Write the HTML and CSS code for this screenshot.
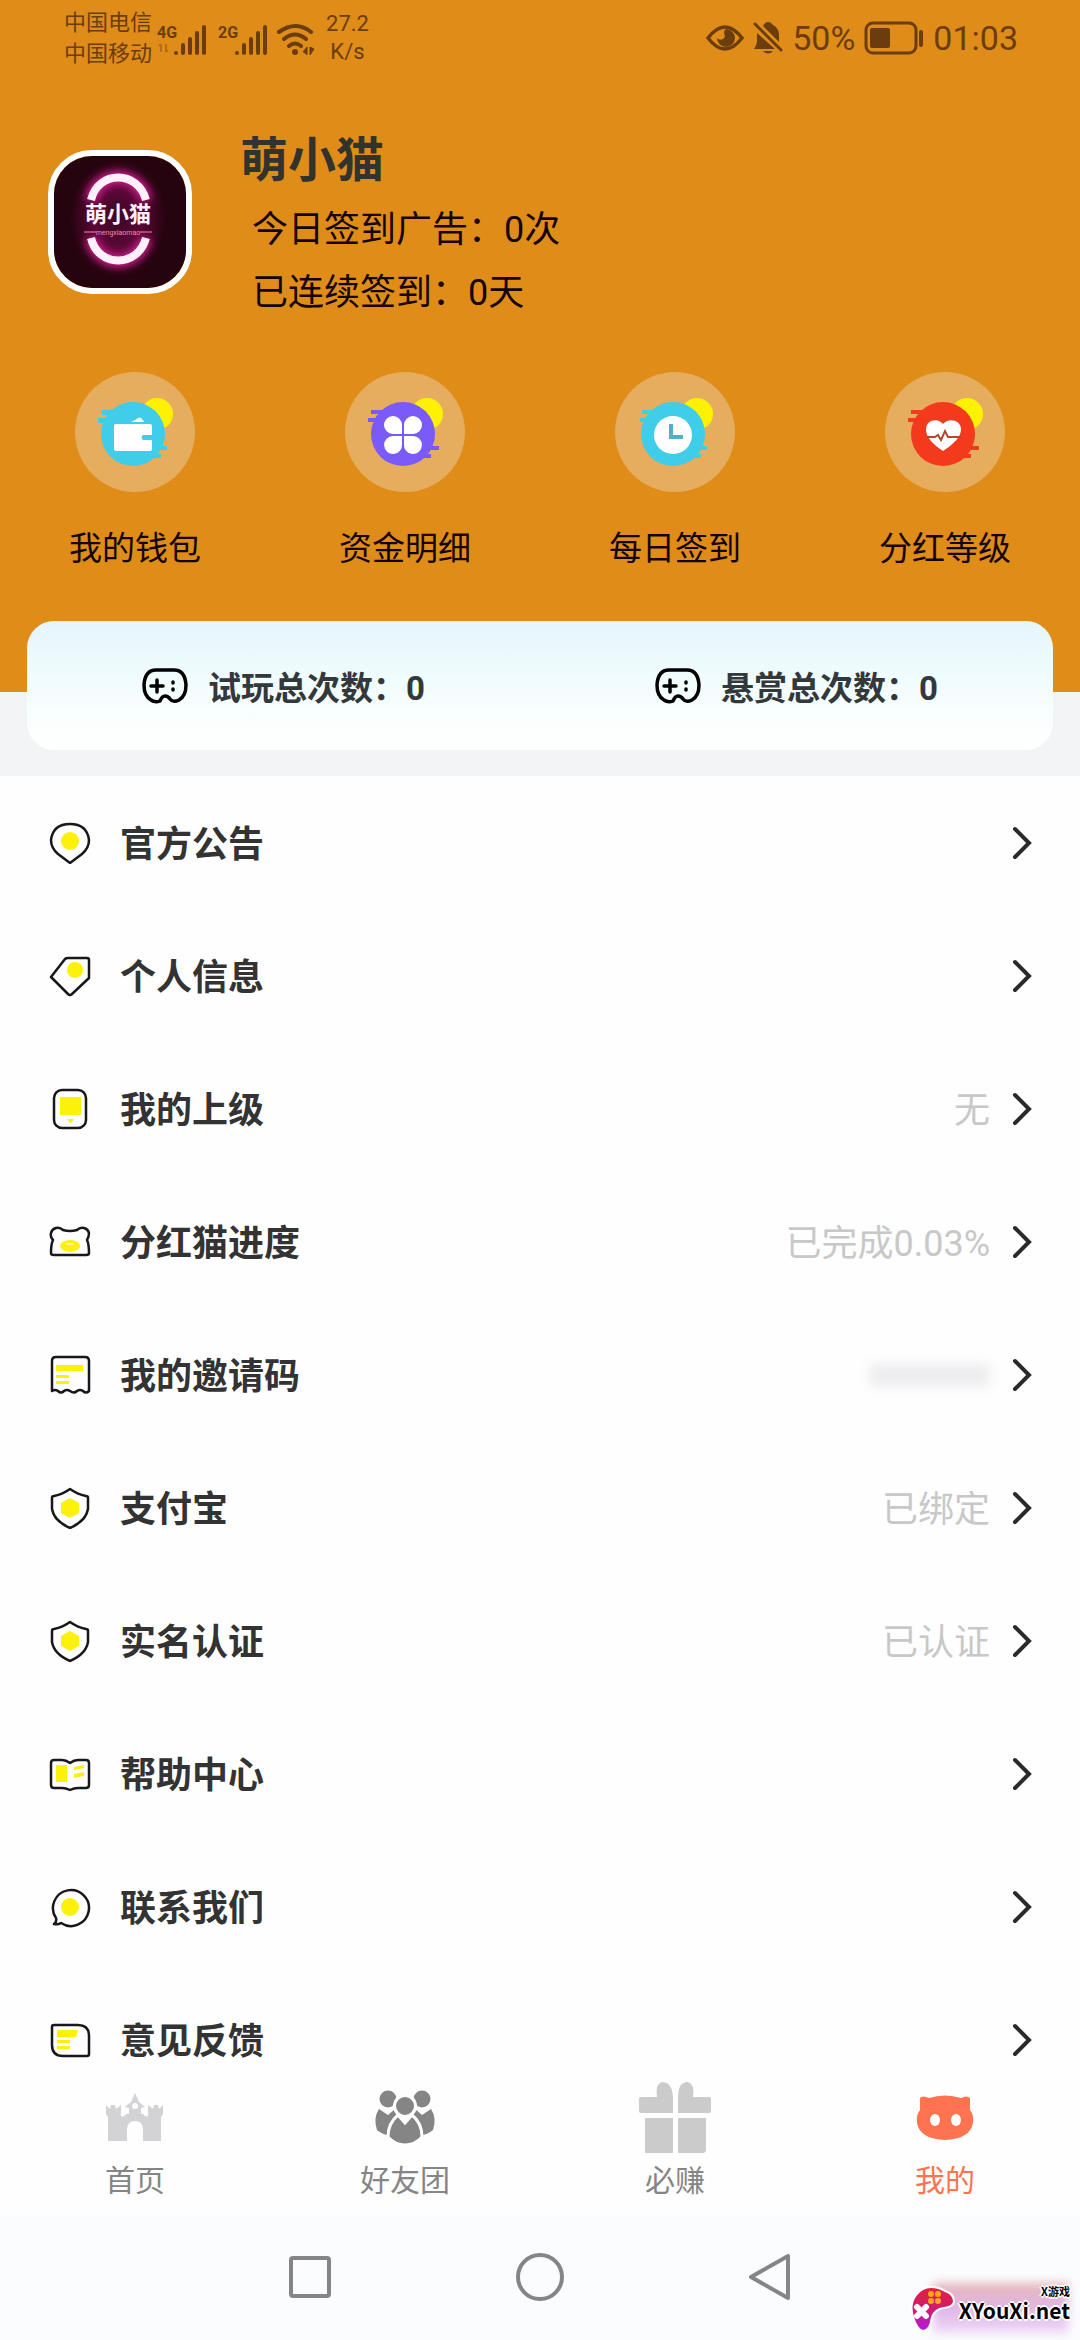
FILE: index.html
```html
<!DOCTYPE html>
<html lang="zh-CN">
	<head>
		<meta charset="utf-8">
		<title>我的</title>
		<meta name="viewport" content="width=device-width, initial-scale=1" />
		<link rel="stylesheet" href="styles.css">
	</head>
	<body>
		<header class="top">
			<div class="status">
				<div class="carriers"><span>中国电信</span><span>中国移动</span></div>
				<svg class="signals" width="160" height="36" viewBox="0 0 160 36">
					<g font-family="Roboto, sans-serif" font-weight="700" font-size="16" fill="currentColor">
						<text x="1" y="18">4G</text>
						<text x="62" y="18">2G</text>
					</g>
					<path d="M5 24v8M3 26l2-2M10 24v8M10 32l2-2" fill="none" stroke="currentColor" stroke-width="2" opacity=".35"/>
					<g stroke="currentColor" stroke-width="4" stroke-linecap="round">
						<path d="M20 33v0M27 25v8M34 19v14M41 13v20M48 7v26"/>
						<path d="M81 33v0M88 25v8M95 19v14M102 13v20M109 7v26"/>
					</g>
					<g fill="none" stroke="currentColor" stroke-width="4" stroke-linecap="round">
						<path d="M123 12q17-12 32 0M128 19q11-9 22 0M133 26q6-5 12 0"/>
					</g>
					<circle cx="139" cy="32" r="3" fill="currentColor"/>
					<path d="M147 32l4-5v8M154 27v8l4-6z" fill="currentColor" stroke="currentColor"/>
				</svg>
				<div class="speed"><span>27.2</span><span>K/s</span></div>
				<div class="status-right">
					<svg width="38" height="32" viewBox="0 0 38 32">
						<path d="M2 16Q19-6 36 16Q19 38 2 16z" fill="none" stroke="currentColor" stroke-width="3.5"/>
						<path d="M20 7a9 9 0 1 1-9 9q3 3 6 1t1-6q0-3 2-4z" fill="currentColor"/>
					</svg>
					<svg width="30" height="34" viewBox="0 0 30 34">
						<path d="M10 5q2-4 5-4t5 3q6 3 6 10v7zM4 12l18 16H1q3-4 3-8zM10 30h10q-5 5-10 0z" fill="currentColor"/>
						<path d="M2 3l26 26" stroke="currentColor" stroke-width="3" stroke-linecap="round"/>
					</svg>
					<span>50%</span>
					<svg width="60" height="34" viewBox="0 0 60 34">
						<rect x="2" y="2" width="50" height="30" rx="7" fill="none" stroke="currentColor" stroke-width="3"/>
						<rect x="6" y="7" width="20" height="20" rx="2" fill="currentColor"/>
						<path d="M57 11v13" stroke="currentColor" stroke-width="4" stroke-linecap="round"/>
					</svg>
					<time>01:03</time>
				</div>
			</div>

			<div class="profile">
				<svg class="avatar" viewBox="0 0 132 132">
					<defs>
						<radialGradient id="neon">
							<stop offset="0" stop-color="#3a0724"/>
							<stop offset=".5" stop-color="#5a0736"/>
							<stop offset="1" stop-color="#26040f"/>
						</radialGradient>
						<filter id="glow" x="-30%" y="-30%" width="160%" height="160%"><feGaussianBlur stdDeviation="4"/></filter>
					</defs>
					<rect width="132" height="132" fill="#26040f"/>
					<ellipse cx="64" cy="62" rx="48" ry="58" fill="url(#neon)"/>
					<g fill="none" stroke="#e0249a" stroke-width="12" filter="url(#glow)">
						<path d="M37 44C44 14 84 14 92 44M37 82C44 112 84 112 92 82"/>
					</g>
					<g fill="none" stroke="#fff0fa" stroke-width="8">
						<path d="M37 44C44 14 84 14 92 44M37 82C44 112 84 112 92 82"/>
					</g>
					<text class="avatar-name" x="64" y="66" text-anchor="middle">萌小猫</text>
					<path d="M30 76h12M86 76h12" stroke="#f8a"/>
					<text class="avatar-sub" x="64" y="79" text-anchor="middle">mengxiaomao</text>
				</svg>
				<div class="who">
					<h1>萌小猫</h1>
					<p>今日签到广告：0次</p>
					<p>已连续签到：0天</p>
				</div>
			</div>

			<nav class="quick">
				<a href="#">
					<svg viewBox="0 0 120 120">
						<circle cx="82" cy="42" r="16" fill="#fff200"/>
						<g fill="#3fcdea"><circle cx="58" cy="62" r="32"/><path d="M27 38h14v5H27zM23 46h14v5H23zM80 74h12v4H80zM74 82h12v4H74z"/></g>
						<path d="M56 50q5-2 7-4 3-2 6 4zM41 52h34q2 0 2 2v9h-9a3 3 0 0 0 0 5h9v9q0 2-2 2H41q-2 0-2-2V54q0-2 2-2z" fill="#fff"/>
					</svg>
					<span>我的钱包</span>
				</a>
				<a href="#">
					<svg viewBox="0 0 120 120">
						<circle cx="82" cy="42" r="16" fill="#fff200"/>
						<g fill="#7a5af8"><circle cx="58" cy="62" r="32"/><path d="M26 38h14v4H26zM23 46h14v4H23zM78 74h16v4H78zM74 82h12v4H74z"/></g>
						<path d="M57 62h-9a9 9 0 1 1 9-9zM59 62v-9a9 9 0 1 1 9 9zM57 64v8a9 9 0 1 1-9-8zM59 64h9a9 9 0 1 1-9 8z" fill="#fff"/>
					</svg>
					<span>资金明细</span>
				</a>
				<a href="#">
					<svg viewBox="0 0 120 120">
						<circle cx="82" cy="42" r="16" fill="#fff200"/>
						<g fill="#3fcdea"><circle cx="58" cy="62" r="32"/><path d="M27 38h14v4H27zM25 46h12v4H25zM80 74h12v4H80zM74 82h12v4H74z"/></g>
						<circle cx="58" cy="63" r="19" fill="#fff"/>
						<path d="M56 52v13h12" fill="none" stroke="#4ab4c4" stroke-width="4"/>
					</svg>
					<span>每日签到</span>
				</a>
				<a href="#">
					<svg viewBox="0 0 120 120">
						<circle cx="82" cy="42" r="16" fill="#fff200"/>
						<g fill="#f33a1d"><circle cx="58" cy="62" r="32"/><path d="M26 38h14v4H26zM23 46h14v4H23zM78 74h16v4H78zM74 82h12v4H74z"/></g>
						<path d="M58 79C48 72 41 66 41 57c0-9 12-12 17-5 5-7 18-4 18 5 0 9-8 15-18 22z" fill="#fff"/>
						<path d="M42 65h8l3-2 3 5 4-9 3 6h13" fill="none" stroke="#b5482c" stroke-width="2"/>
					</svg>
					<span>分红等级</span>
				</a>
			</nav>
		</header>

		<section class="summary">
			<div class="stats">
				<div class="stat">
					<svg width="46" height="36" viewBox="0 0 46 36"><path d="M18 33q-5 2-9-1Q2 28 2 17 3 2 14 2h18q11 0 12 15 0 11-7 15-6 3-9-1-2-3-5-3t-5 5M9 18h12M15 12v12M31 14v1M31 21v1" fill="none" stroke="#000" stroke-width="3.5" stroke-linecap="round" stroke-linejoin="round"/></svg>
					<span>试玩总次数：0</span>
				</div>
				<div class="stat">
					<svg width="46" height="36" viewBox="0 0 46 36"><path d="M18 33q-5 2-9-1Q2 28 2 17 3 2 14 2h18q11 0 12 15 0 11-7 15-6 3-9-1-2-3-5-3t-5 5M9 18h12M15 12v12M31 14v1M31 21v1" fill="none" stroke="#000" stroke-width="3.5" stroke-linecap="round" stroke-linejoin="round"/></svg>
					<span>悬赏总次数：0</span>
				</div>
			</div>
		</section>

		<main class="menu">
			<a href="#">
				<svg class="icon" viewBox="0 0 42 42"><path d="M21 41L9 32Q2 26 2 18 4 2 21 2t19 16q0 8-7 14z"/><circle class="y" cx="21" cy="19" r="9"/></svg>
				<span class="label">官方公告</span>
				<svg class="go" viewBox="0 0 20 34"><path d="M3 3l14 14L3 31"/></svg>
			</a>
			<a href="#">
				<svg class="icon" viewBox="0 0 42 42"><path d="M2 22L16 4q1-1 3-1h19q2 0 2 2v18L23 39q-2 2-4 0z"/><circle class="y" cx="26" cy="15" r="8"/></svg>
				<span class="label">个人信息</span>
				<svg class="go" viewBox="0 0 20 34"><path d="M3 3l14 14L3 31"/></svg>
			</a>
			<a href="#">
				<svg class="icon" viewBox="0 0 42 42"><rect x="5" y="2" width="32" height="38" rx="8"/><path class="y" d="M11 9h21v18H11zM18 31h7l-3 4h-1z"/></svg>
				<span class="label">我的上级</span>
				<span class="value">无</span>
				<svg class="go" viewBox="0 0 20 34"><path d="M3 3l14 14L3 31"/></svg>
			</a>
			<a href="#">
				<svg class="icon" viewBox="0 0 42 42"><path d="M14 9q7 2 14 0 3-3 7-2 4 1 5 5 0 4-2 7 2 4 2 13 0 2-3 2H5q-3 0-3-2 0-9 2-13-3-3-2-7 1-4 5-5 4-1 7 2z"/><ellipse class="y" cx="21" cy="25" rx="10" ry="6"/><ellipse cx="21" cy="23" rx="4" ry="1" fill="#fffbb0" stroke="none"/></svg>
				<span class="label">分红猫进度</span>
				<span class="value">已完成0.03%</span>
				<svg class="go" viewBox="0 0 20 34"><path d="M3 3l14 14L3 31"/></svg>
			</a>
			<a href="#">
				<svg class="icon" viewBox="0 0 42 42"><path d="M3 37V7q0-4 4-4h29q4 0 4 4v30q-3 3-6 0-3-2-6 0-3 3-7 0-3-2-6 0-3 3-6 0-3-2-6 0z"/><path class="y" d="M7 11h27v6H7zM7 21h13v3H7zM7 27h13v3H7z"/></svg>
				<span class="label">我的邀请码</span>
				<span class="masked"></span>
				<svg class="go" viewBox="0 0 20 34"><path d="M3 3l14 14L3 31"/></svg>
			</a>
			<a href="#">
				<svg class="icon" viewBox="0 0 42 42"><path d="M21 2q7 5 16 7 2 0 2 2v11q-2 12-18 19Q5 34 3 22V11q0-2 2-2 9-2 16-7z"/><path class="y" d="M21 11l9 5v10l-9 5-9-5V16z"/></svg>
				<span class="label">支付宝</span>
				<span class="value">已绑定</span>
				<svg class="go" viewBox="0 0 20 34"><path d="M3 3l14 14L3 31"/></svg>
			</a>
			<a href="#">
				<svg class="icon" viewBox="0 0 42 42"><path d="M21 2q7 5 16 7 2 0 2 2v11q-2 12-18 19Q5 34 3 22V11q0-2 2-2 9-2 16-7z"/><path class="y" d="M21 11l9 5v10l-9 5-9-5V16z"/></svg>
				<span class="label">实名认证</span>
				<span class="value">已认证</span>
				<svg class="go" viewBox="0 0 20 34"><path d="M3 3l14 14L3 31"/></svg>
			</a>
			<a href="#">
				<svg class="icon" viewBox="0 0 42 42"><path d="M21 10q4-3 8-3h8q3 0 3 3v22q0 3-3 3h-8q-4 0-8 2-4-2-8-2H5q-3 0-3-3V10q0-3 3-3h8q4 0 8 3z"/><path class="y" d="M7 12h11v17H7zM25 14l10-2v3l-10 2zM25 21l10-2v4l-10 2z"/></svg>
				<span class="label">帮助中心</span>
				<svg class="go" viewBox="0 0 20 34"><path d="M3 3l14 14L3 31"/></svg>
			</a>
			<a href="#">
				<svg class="icon" viewBox="0 0 42 42"><path d="M5 38q3-2 2-6A18 18 0 1 1 12 37q-3 2-7 1z"/><circle class="y" cx="21" cy="21" r="9"/></svg>
				<span class="label">联系我们</span>
				<svg class="go" viewBox="0 0 20 34"><path d="M3 3l14 14L3 31"/></svg>
			</a>
			<a href="#">
				<svg class="icon" viewBox="0 0 42 42"><path d="M5 6h24q11 0 11 11v18q0 2-2 2H14Q3 37 3 26V8q0-2 2-2z"/><path class="y" d="M8 11h21l-2 7H8zM8 21h13v3H8zM8 27h13v3H8z"/></svg>
				<span class="label">意见反馈</span>
				<svg class="go" viewBox="0 0 20 34"><path d="M3 3l14 14L3 31"/></svg>
			</a>
		</main>

		<footer class="bottom">
			<nav class="tabs">
				<a href="#">
					<svg viewBox="0 0 72 72"><path fill="#d3d3d6" d="M7 24l4 4 1-4h4l1 4 5-4v7q-1 6 3 4 3-3 5-2v-6l-4-1 6-5 4-9 4 9 6 5-4 1v6q2-1 4 2 4 2 3-4v-7l5 4 1-4h4l1 4 4-4v9l-2 3v24H44V49q0-9-8-9t-8 9v11H9V36l-2-3z"/><circle cx="36" cy="25" r="3" fill="#fff"/></svg>
					<span>首页</span>
				</a>
				<a href="#">
					<svg viewBox="0 0 72 72"><g fill="#858585"><circle cx="19" cy="18" r="8.500"/><circle cx="53" cy="18" r="8.500"/><path d="M10 28l9 6 7-6 8 10-14 16q-6 0-12-5-4-12 2-21zM62 28l-9 6-7-6-8 10 14 16q6 0 12-5 4-12-2-21z"/></g><g fill="#858585" stroke="#fff" stroke-width="3"><path d="M29 34l7 8 7-8q10 8 10 22-7 8-17 8t-17-8q0-14 10-22z"/><circle cx="36" cy="25" r="10.500"/></g></svg>
					<span>好友团</span>
				</a>
				<a href="#">
					<svg viewBox="0 0 72 72"><path fill="#cbcbcb" d="M2 16h16Q16 3 23 1q10 0 11 15v16H2q-2 0-2-2V18q0-2 2-2zM70 16H54Q56 3 49 1q-10 0-10 15v16h31q2 0 2-2V18q0-2-2-2zM6 37h28v35H6zM39 37h28v33l-2 2H39z"/></svg>
					<span>必赚</span>
				</a>
				<a href="#" class="on">
					<svg viewBox="0 0 72 72"><path fill="#ff7350" d="M11 17q3-3 9 0 16-5 32 0 6-3 9 0v12q4 5 3 13-3 16-28 17-25-1-28-17-1-8 3-13z"/><ellipse cx="26" cy="39" rx="5" ry="6" fill="#fff"/><ellipse cx="47" cy="39" rx="5" ry="6" fill="#fff"/></svg>
					<span>我的</span>
				</a>
			</nav>
			<div class="keys">
				<button aria-label="最近任务"><svg viewBox="0 0 50 50"><rect x="6" y="6" width="38" height="38" rx="2"/></svg></button>
				<button aria-label="主屏幕"><svg viewBox="0 0 50 50"><circle cx="25" cy="25" r="22"/></svg></button>
				<button aria-label="返回"><svg viewBox="0 0 50 50"><path d="M43 4v42L6 25z"/></svg></button>
			</div>
			<div class="mark">
				<svg width="48" height="48" viewBox="0 0 48 48">
					<defs><linearGradient id="pad" x1="0" y1="0" x2="0" y2="1"><stop offset="0" stop-color="#e0203c"/><stop offset=".5" stop-color="#d01c70"/><stop offset="1" stop-color="#b01ae8"/></linearGradient></defs>
					<path d="M22 2q8 0 14 4 8 2 9 10 0 6-10 7-9 1-12 9-2 14-9 14-6-1-10-14-4-14 3-22 6-8 15-8z" fill="url(#pad)" stroke="#fff" stroke-width="2"/>
					<path d="M8 22l9 9M17 22l-9 9" stroke="#fff" stroke-width="6" stroke-linecap="round"/>
					<g fill="#ffa51c"><circle cx="22" cy="9" r="3"/><circle cx="29" cy="9" r="3"/><circle cx="22" cy="16" r="3"/><circle cx="29" cy="16" r="3"/></g>
				</svg>
				<div class="mark-text"><small>X游戏</small><b>XYouXi.net</b></div>
			</div>
		</footer>
	</body>
</html>
```

FILE: styles.css
```css
body {
	margin: 0;
	background: #fefefe;
	color: #333;
	font-family: Roboto, "Noto Sans CJK SC", sans-serif;
}
a { color: inherit; text-decoration: none; }
h1, p { margin: 0; font-weight: normal; }
svg { display: block; flex: none; }

.top {
	background: #df8c18;
	color: #14040a;
	padding-bottom: 118px;
}
.status {
	display: flex;
	align-items: center;
	height: 76px;
	padding: 0 62px 0 64px;
	color: #6b3d0c;
}
.carriers, .speed {
	display: flex;
	flex-direction: column;
	font-size: 22px;
	line-height: 31px;
}
.signals { margin: 0 10px 0 4px; }
.speed { text-align: center; line-height: 28px; }
.status-right {
	display: flex;
	align-items: center;
	gap: 9px;
	margin-left: auto;
	font-size: 34px;
}

.profile {
	display: flex;
	gap: 48px;
	padding: 53px 48px 0;
	height: 195px;
}
.avatar {
	width: 132px;
	height: 132px;
	margin-top: 21px;
	border: 6px solid #fff;
	border-radius: 44px;
}
.avatar-name {
	font: bold 22px "Noto Sans CJK SC", sans-serif;
	fill: #fff0fa;
}
.avatar-sub { font-size: 7px; fill: #f8a; }
.who h1 {
	color: #33332d;
	font-size: 48px;
	font-weight: bold;
	line-height: 64px;
}
.who p {
	padding-left: 12px;
	font-size: 36px;
	line-height: 63px;
}
.who h1 + p { padding-top: 6px; }

.quick, .tabs { display: flex; }
.quick { padding-top: 48px; }
.quick a, .tabs a {
	flex: 1;
	display: flex;
	flex-direction: column;
	align-items: center;
}
.quick svg {
	width: 120px;
	height: 120px;
	border-radius: 50%;
	background: #e6ad5f;
}
.quick span {
	margin-top: 32px;
	font-size: 33px;
	line-height: 50px;
}

.summary {
	display: flex;
	padding: 0 27px 26px;
	background: #f3f4f5;
}
.stats {
	flex: 1;
	display: flex;
	margin-top: -71px;
	height: 129px;
	border-radius: 27px;
	background: linear-gradient(#e6f5fd, #effcfd 40%, #fdfefe 85%);
}
.stat {
	flex: 1;
	display: flex;
	align-items: center;
	justify-content: center;
	gap: 20px;
	color: #33383a;
	font-size: 33px;
	font-weight: bold;
}

.menu { background: #fefefe; }
.menu a {
	display: flex;
	align-items: center;
	height: 133px;
	padding: 0 48px 0 49px;
}
.icon {
	width: 42px;
	height: 42px;
	fill: none;
	stroke: #17171c;
	stroke-width: 2.5;
	stroke-linejoin: round;
}
.icon .y { fill: #fdf009; stroke: none; }
.label, .value {
	padding-bottom: 4px;
	font-size: 36px;
}
.label {
	flex: 1;
	padding-left: 29px;
	font-weight: bold;
}
.value { color: #c8c8c8; }
.masked {
	width: 120px;
	height: 22px;
	background: #ececee;
	filter: blur(6px);
}
.go {
	width: 20px;
	height: 34px;
	margin-left: 22px;
	fill: none;
	stroke: #2a2a2a;
	stroke-width: 4;
	stroke-linecap: round;
}

.bottom {
	position: fixed;
	left: 0;
	right: 0;
	bottom: 0;
	background: #fefefe;
}
.tabs {
	padding: 18px 0 12px;
	color: #858585;
	font-size: 30px;
	line-height: 44px;
}
.tabs svg { width: 72px; height: 72px; }
.tabs span { margin-top: 6px; }
.tabs .on { color: #ff7350; }
.keys {
	display: flex;
	justify-content: center;
	gap: 180px;
	padding: 37px 0 38px;
	background: #fbfcfe;
}
.keys button {
	width: 50px;
	height: 50px;
	padding: 0;
	border: 0;
	background: none;
}
.keys svg {
	fill: none;
	stroke: #858587;
	stroke-width: 4;
	stroke-linejoin: round;
}
/* site badge over the corner */
.mark {
	position: absolute;
	right: 10px;
	bottom: 7px;
	display: flex;
	gap: 2px;
	color: #000;
	font-family: "Noto Sans CJK SC", sans-serif;
}
.mark::before {
	content: "";
	position: absolute;
	inset: -2px 2px 0 24px;
	background: linear-gradient(#e6b6b4, #dfb5e8 50%, #eed8f6);
	filter: blur(5px);
}
.mark > * { position: relative; }
.mark-text {
	display: flex;
	flex-direction: column;
	text-shadow: 2px 0 #fff, -2px 0 #fff, 0 2px #fff, 0 -2px #fff;
}
.mark-text small {
	font-size: 11px;
	font-weight: bold;
	line-height: 12px;
	text-align: right;
}
.mark-text b { font-size: 21px; line-height: 26px; }
```
